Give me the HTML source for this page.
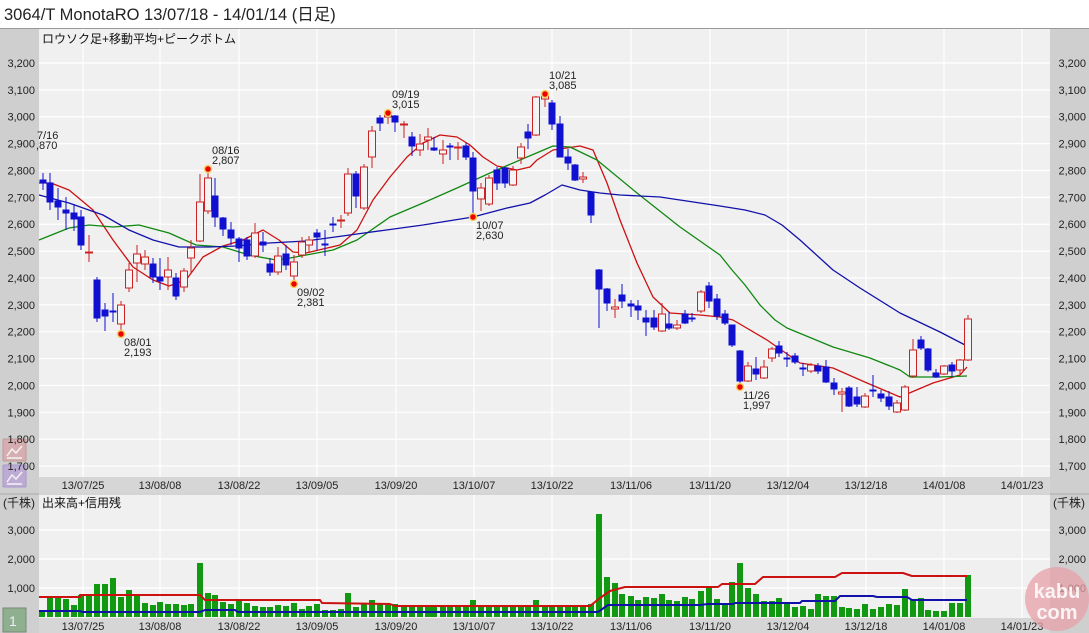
<!DOCTYPE html>
<html><head><meta charset="utf-8">
<style>
html,body{margin:0;padding:0;width:1089px;height:633px;overflow:hidden;background:#fff;font-family:"Liberation Sans","Noto Sans CJK JP",sans-serif;}
svg text{font-family:"Liberation Sans","Noto Sans CJK JP",sans-serif;}
</style></head><body>
<svg id="s" width="1089" height="633" xmlns="http://www.w3.org/2000/svg">
<rect x="0" y="0" width="1089" height="633" fill="#fff"/>
<text x="4" y="20" font-size="16.5" fill="#222">3064/T MonotaRO  13/07/18 - 14/01/14 (日足)</text>
<line x1="0" y1="28.5" x2="1089" y2="28.5" stroke="#999"/>
<rect x="0" y="29" width="39" height="604" fill="#cfcfcf"/>
<rect x="1050" y="29" width="39" height="604" fill="#cfcfcf"/>
<rect x="39" y="29" width="1011" height="448" fill="#f0f0f0"/>
<rect x="39" y="477" width="1011" height="16" fill="#d6d6d6"/>
<line x1="0" y1="494" x2="1089" y2="494" stroke="#aaa"/>
<rect x="39" y="495" width="1011" height="123" fill="#f0f0f0"/>
<rect x="39" y="618" width="1011" height="15" fill="#d6d6d6"/>
<g id="grid"></g>
<g id="ma"></g>
<g id="cd"></g>
<g id="vol"></g>
<g id="icons" opacity="0.75">
<rect x="3" y="439" width="23" height="22" fill="#d9a3a8" stroke="#b88" rx="1"/>
<path d="M7 456 L12 449 L16 453 L22 446 M7 458 H22" stroke="#fff" stroke-width="1.5" fill="none"/>
<rect x="3" y="465" width="23" height="22" fill="#b9a0d6" stroke="#98c" rx="1"/>
<path d="M7 482 L12 475 L16 479 L22 472 M7 484 H22" stroke="#fff" stroke-width="1.5" fill="none"/>
</g>
<g id="lab" font-size="11" fill="#222"></g>
<text x="42" y="43" font-size="12" fill="#111">ロウソク足+移動平均+ピークボトム</text>
<text x="42" y="507" font-size="12" fill="#111">出来高+信用残</text>
<text x="3" y="507" font-size="12" fill="#222">(千株)</text>
<text x="1053" y="507" font-size="12" fill="#222">(千株)</text>
<rect x="3" y="608" width="23" height="24" fill="#8fb08f" stroke="#787" />
<text x="9" y="626" font-size="14" fill="#eef">1</text>
<circle cx="1057" cy="599" r="32" fill="#e7a0a8" opacity="0.75"/>
<text x="1057" y="598" font-size="20" font-weight="bold" fill="#fff" fill-opacity="0.85" text-anchor="middle">kabu</text>
<text x="1057" y="619" font-size="20" font-weight="bold" fill="#fff" fill-opacity="0.85" text-anchor="middle">com</text>
</svg>
<script>
var NS="http://www.w3.org/2000/svg";
function el(p,t,a,txt){var e=document.createElementNS(NS,t);for(var k in a)e.setAttribute(k,a[k]);if(txt!=null)e.textContent=txt;document.getElementById(p).appendChild(e);return e;}
var gx=[83,160,239,317,396,474,552,631,710,788,866,944,1022];
var dl=["13/07/25","13/08/08","13/08/22","13/09/05","13/09/20","13/10/07","13/10/22","13/11/06","13/11/20","13/12/04","13/12/18","14/01/08","14/01/23"];
gx.forEach(function(x,i){
 el("grid","line",{x1:x,y1:29,x2:x,y2:477,stroke:"#fff","stroke-width":1.2});
 el("grid","line",{x1:x,y1:495,x2:x,y2:618,stroke:"#fff","stroke-width":1.2});
 el("lab","text",{x:x,y:489,"text-anchor":"middle"},dl[i]);
 el("lab","text",{x:x,y:630,"text-anchor":"middle"},dl[i]);
});
var pl=["3,200","3,100","3,000","2,900","2,800","2,700","2,600","2,500","2,400","2,300","2,200","2,100","2,000","1,900","1,800","1,700"];
pl.forEach(function(t,i){var y=63+i*26.87;
 el("grid","line",{x1:39,y1:y,x2:1050,y2:y,stroke:"#fff","stroke-width":1.2});
 el("lab","text",{x:35,y:y+4,"text-anchor":"end"},t);
 el("lab","text",{x:1086,y:y+4,"text-anchor":"end"},t);
});
[["3,000",530],["2,000",559],["1,000",588]].forEach(function(a){
 el("grid","line",{x1:39,y1:a[1],x2:1050,y2:a[1],stroke:"#fff","stroke-width":1.2});
 el("lab","text",{x:35,y:a[1]+4,"text-anchor":"end"},a[0]);
 el("lab","text",{x:1086,y:a[1]+4,"text-anchor":"end"},a[0]);
});
var C=[[43,173,190,180,183,'b'],[50,173,210,183,202,'b'],[58,188,220,201,207,'b'],[66,197,230,210,213,'b'],[74,204,231,213,219,'b'],[81,210,250,217,245,'b'],[89,235,262,252,253,'r'],[97,277,322,280,318,'b'],[105,303,331,310,316,'b'],[113,293,322,311,312,'b'],[121,301,333,305,324,'r'],[129,263,292,270,288,'r'],[137,245,282,254,263,'r'],[145,250,270,257,264,'r'],[153,258,283,264,277,'b'],[160,258,290,277,281,'b'],[168,257,290,270,277,'r'],[176,273,300,278,296,'b'],[184,268,292,271,287,'r'],[191,240,273,248,258,'r'],[200,174,242,202,241,'r'],[208,169,214,178,211,'r'],[215,178,227,196,217,'b'],[223,217,236,218,229,'b'],[231,222,245,230,238,'b'],[239,237,262,239,248,'b'],[247,237,260,240,256,'b'],[255,223,258,233,256,'r'],[263,232,252,242,245,'b'],[270,258,276,264,272,'b'],[278,247,275,256,272,'r'],[286,245,270,254,265,'b'],[294,255,283,262,276,'r'],[302,237,258,242,255,'r'],[309,236,253,240,245,'r'],[317,229,250,233,237,'b'],[325,230,256,244,245,'b'],[333,217,232,224,225,'b'],[341,215,228,220,221,'r'],[348,168,216,174,213,'r'],[356,171,208,174,196,'b'],[364,164,210,167,208,'r'],[372,126,168,131,157,'r'],[380,115,131,118,123,'b'],[388,110,124,115,117,'r'],[395,115,132,116,122,'b'],[404,121,138,124,125,'r'],[412,132,156,137,146,'b'],[420,134,156,144,150,'r'],[428,128,150,137,140,'r'],[434,137,151,148,150,'b'],[443,140,164,150,154,'r'],[450,143,160,146,147,'b'],[458,142,160,147,148,'r'],[466,143,160,146,157,'b'],[473,152,218,158,191,'b'],[481,183,211,188,199,'r'],[489,175,206,178,204,'r'],[497,167,190,170,183,'b'],[505,167,188,168,183,'b'],[513,166,186,170,185,'r'],[521,143,164,147,158,'r'],[528,124,149,132,138,'b'],[536,96,136,97,135,'r'],[545,91,107,96,99,'r'],[552,100,130,103,124,'b'],[560,116,157,124,157,'b'],[568,149,170,157,163,'b'],[575,164,181,165,180,'b'],[583,172,183,177,179,'r'],[591,192,223,192,215,'b'],[599,269,328,270,289,'b'],[607,288,311,289,303,'b'],[615,299,318,307,309,'r'],[622,284,308,295,301,'b'],[631,300,317,304,306,'b'],[638,300,320,306,310,'b'],[646,310,336,318,322,'b'],[654,310,330,318,327,'b'],[662,303,332,314,331,'r'],[669,312,330,324,328,'b'],[677,320,330,325,328,'r'],[685,310,324,314,323,'b'],[692,313,322,318,319,'b'],[701,290,313,292,311,'r'],[709,282,308,286,301,'b'],[717,294,320,299,316,'b'],[725,310,325,314,323,'b'],[732,325,347,325,345,'b'],[740,350,385,351,381,'b'],[748,362,382,366,381,'r'],[756,357,380,369,374,'b'],[764,360,379,367,378,'r'],[772,347,362,349,358,'r'],[779,341,357,346,353,'b'],[787,352,367,358,359,'b'],[795,353,364,356,362,'b'],[803,363,376,368,369,'b'],[811,363,373,365,371,'r'],[818,363,374,366,371,'b'],[826,360,383,367,382,'b'],[834,378,395,383,389,'b'],[842,388,412,392,394,'r'],[849,386,407,388,406,'b'],[857,387,407,397,404,'b'],[865,393,408,396,407,'r'],[873,375,397,390,391,'b'],[881,390,402,394,398,'b'],[889,391,410,397,406,'b'],[897,400,413,403,412,'r'],[905,385,411,387,410,'r'],[913,339,378,350,376,'r'],[921,336,350,340,348,'b'],[928,348,372,349,370,'b'],[936,369,378,373,377,'b'],[944,365,375,366,374,'r'],[952,362,377,365,371,'b'],[960,359,374,360,370,'r'],[968,315,361,319,360,'r']];
C.forEach(function(c){var col=c[5]=='r'?'#cc2222':'#1010d0';
 el("cd","line",{x1:c[0],y1:c[1],x2:c[0],y2:c[2],stroke:col,"stroke-width":1});
 var h=Math.max(c[4]-c[3],1);
 if(c[5]=='r') el("cd","rect",{x:c[0]-3.5,y:c[3],width:7,height:h,fill:"#f4f4f4",stroke:col,"stroke-width":1});
 else el("cd","rect",{x:c[0]-3.5,y:c[3]-0.5,width:7,height:h+1,fill:col});
});
function poly(p,pts,col,w){el(p,"polyline",{points:pts,fill:"none",stroke:col,"stroke-width":w||1.3,"stroke-linejoin":"round"});}
poly("ma","39,183 51,183 69,190 93,210 113,240 133,267 153,280 169,286 186,280 203,257 223,246 243,240 263,230 279,240 293,252 306,253 340,245 357,230 373,200 390,177 407,157 423,143 440,135 457,137 470,145 483,157 497,166 517,170 530,167 537,160 553,150 580,146 593,150 607,183 620,220 637,263 653,297 670,313 700,315 720,317 733,320 767,340 800,363 833,368 867,383 900,397 933,383 960,375 967,367","#cc1111");
poly("ma","39,240 69,228 89,225 113,227 139,225 169,233 196,245 223,247 249,255 276,260 290,258 333,250 357,240 390,217 423,203 457,188 490,173 520,160 553,146 570,147 597,160 637,193 680,227 720,255 732,270 745,285 760,305 775,320 787,328 833,347 870,358 900,370 910,377 940,377 967,376","#118811");
poly("ma","39,195 69,203 103,215 129,230 153,240 179,247 209,247 236,246 269,243 306,241 357,234 423,225 473,217 507,208 530,203 545,195 562,185 580,190 600,193 620,195 660,197 700,203 720,206 745,210 765,215 782,225 800,240 833,270 860,288 900,313 940,332 967,346","#1111aa");
[[121,334,"08/01","2,193",1],[208,169,"08/16","2,807",0],[294,284,"09/02","2,381",1],[388,113,"09/19","3,015",0],[473,217,"10/07","2,630",1],[545,94,"10/21","3,085",0],[740,387,"11/26","1,997",1]].forEach(function(m){
 el("cd","circle",{cx:m[0],cy:m[1],r:3.5,fill:"#ee0000",stroke:"#f5d060","stroke-width":1.5});
 if(m[4]){el("lab","text",{x:m[0]+3,y:m[1]+12},m[2]);el("lab","text",{x:m[0]+3,y:m[1]+22},m[3]);}
 else{el("lab","text",{x:m[0]+4,y:m[1]-15},m[2]);el("lab","text",{x:m[0]+4,y:m[1]-5},m[3]);}
});
el("lab","text",{x:37,y:139},"7/16");el("lab","text",{x:36,y:149},",870");
[[42,610],[50,597],[58,597],[66,599],[74,605],[81,595],[89,595],[97,584],[105,584],[113,578],[121,597],[129,590],[137,595],[145,603],[153,605],[160,602],[168,604],[176,604],[184,605],[191,604],[200,563],[208,593],[215,595],[223,602],[231,604],[239,600],[247,603],[255,606],[263,607],[270,607],[278,605],[286,606],[294,603],[302,609],[309,606],[317,604],[325,610],[333,610],[341,609],[348,593],[356,607],[364,604],[372,600],[380,603],[388,605],[395,604],[404,606],[412,607],[420,606],[428,605],[434,607],[443,606],[450,607],[458,606],[466,606],[473,600],[481,605],[489,606],[497,607],[505,607],[513,605],[521,605],[528,605],[536,600],[545,605],[552,606],[560,606],[568,606],[575,605],[583,606],[591,604],[599,514],[607,577],[615,583],[622,594],[631,596],[638,600],[646,597],[654,598],[662,594],[669,600],[677,601],[685,597],[692,599],[701,591],[709,588],[717,599],[725,605],[732,582],[740,563],[748,588],[756,594],[764,601],[772,601],[779,598],[787,604],[795,607],[803,606],[811,609],[818,594],[826,596],[834,596],[842,607],[849,608],[857,609],[865,604],[873,609],[881,607],[889,604],[897,605],[905,589],[913,600],[921,598],[928,610],[936,611],[944,611],[952,603],[960,603],[968,575]].forEach(function(v){
 el("vol","rect",{x:v[0]-3,y:v[1],width:6,height:617-v[1],fill:"#119911"});
});
poly("vol","39,597 80,597 80,595 200,595 205,600 320,600 322,603 390,604 395,606 590,606 600,598 610,591 625,587 718,587 722,584 755,584 763,577 835,577 842,573 903,573 912,576 967,576","#cc1111",2);
poly("vol","39,611 80,611 82,612 200,612 205,610 235,610 238,612 590,612 598,612 608,605 700,605 708,604 733,604 735,603 800,603 802,601 835,601 840,596 873,596 877,597 907,597 912,600 967,600","#1111aa",2);
</script>
</body></html>
